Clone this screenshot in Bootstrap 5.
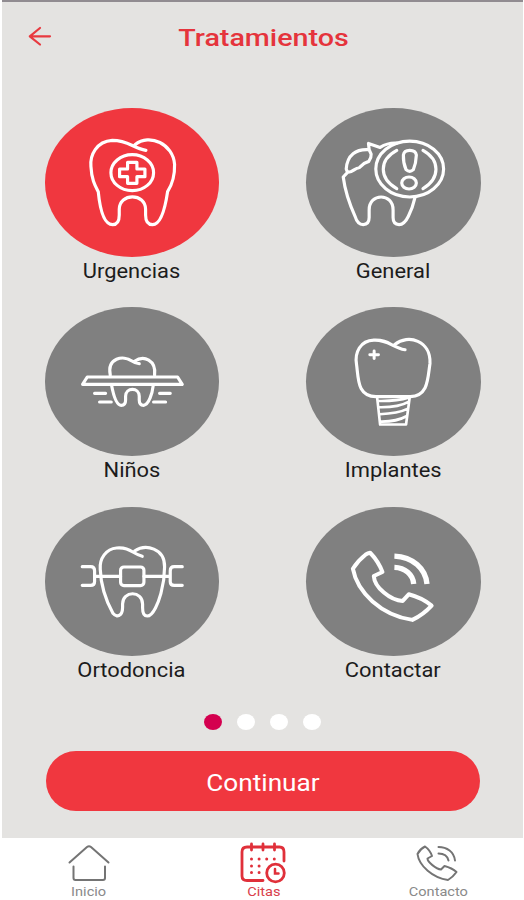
<!DOCTYPE html>
<html lang="es">
<head>
<meta charset="utf-8">
<meta name="viewport" content="width=device-width, initial-scale=1">
<title>Tratamientos</title>
<link href="https://cdn.jsdelivr.net/npm/bootstrap@5.3.0/dist/css/bootstrap.min.css" rel="stylesheet">
<style>
body{font-family:Roboto,"Liberation Sans",sans-serif;background:#fff;color:#1c1c1c}
.screen{height:900px;width:524px;overflow:hidden}
.panel{height:838px;margin:0 1px 0 2px;background:#e4e3e1;border-top:2px solid #918c91}
.topbar{height:106px;padding:0 25px}
.back{width:25px;height:22px;margin-top:23px}
.wide{display:inline-block;white-space:nowrap;transform:scaleX(var(--sx,1.12))}
.title{font-size:24px;line-height:28px;font-weight:500;color:#e5343c;margin-top:22px;padding-left:2px;--sx:1.195}
.tiles{padding:0 42.5px 0 42.5px}
.tile-row{height:199.4px}
.tile{width:174.5px}
.disc{width:174.5px;height:149px;border-radius:50%;background:#808080}
.disc.on{background:#f0373f}
.disc svg{display:block;width:100%;height:100%}
.ico{fill:none;stroke:#fff;stroke-width:9.5;stroke-linecap:round;stroke-linejoin:round}
.tile-label{font-size:20px;line-height:24px;margin-top:2px;--sx:1.095}
.dots{gap:15px;height:16px;margin-top:8px}
.dot{width:18px;height:16px;border-radius:50%;background:#fff}
.dot.on{background:#d4004f}
.cta{height:60px;width:434px;margin:21px 0 0 44px;padding:4px 0 0;border:0;background:#f0373f;color:#fff;font-size:24px;line-height:28px;--sx:1.09}
.cta:hover{background:#d92f37;color:#fff}
.tabs{height:62px;padding:0 36px 0 39px}
.tab{width:100px;color:#8a8a8a;font-size:13px;line-height:14px;text-decoration:none}
.tab.on{color:#d9404a}
.tab svg{display:block}
.tab .wide{margin-top:1px}
</style>
</head>
<body>
<div class="screen">
<main class="panel">
  <header class="topbar d-flex justify-content-between align-items-start">
    <svg class="back" viewBox="0 0 25 22" fill="none" stroke="#e83a40" stroke-width="2.2" stroke-linecap="round" stroke-linejoin="round"><path d="M13 3 2.8 11.3 13 19.5M2.8 11.3H23"/></svg>
    <h1 class="title wide mb-0">Tratamientos</h1>
    <span class="back"></span>
  </header>
  <section class="tiles">
    <div class="tile-row d-flex justify-content-between">
      <div class="tile text-center">
        <div class="disc on"><svg viewBox="15 24 522 447" class="ico"><path d="M317 151C276 144 266 121 216 121C168 124 149 166 152 199C154 238 164 256 174 275C178 316 188 374 217 374Q237 374 237 345V328C237 278 316 278 316 328V345Q316 374 337 374C366 373 377 309 382 275C394 256 404 230 403 193C399 133 329 98 284 134"/><ellipse cx="276" cy="218" rx="64" ry="54"/><path d="M262 187H290V207H314V230H290V250H262V230H238V207H262Z"/></svg></div>
        <div class="tile-label"><span class="wide">Urgencias</span></div>
      </div>
      <div class="tile text-center">
        <div class="disc"><svg viewBox="18 24 525 447" class="ico"><ellipse cx="330" cy="207" rx="102" ry="84"/><path d="M291 151C237 180 237 235 291 266M370 151C422 180 422 235 370 266"/><path d="M311 165Q313 151 330 151Q348 151 350 165Q349 190 341 209Q330 219 319 209Q310 188 311 165Z"/><ellipse cx="328" cy="249" rx="22" ry="18"/><path d="M292 129Q265 127 241 142L206 130L208 149C168 146 142 165 139 207L143 217C160 217 164 204 178 203C187 194 192 188 207 184Q215 173 214 162L208 149M143 217L130 231C136 277 150 315 166 350Q173 374 190 374Q208 374 208 353V330C208 278 280 278 280 330V353Q280 374 298 374Q314 374 326 349Q339 323 346 292"/></svg></div>
        <div class="tile-label"><span class="wide">General</span></div>
      </div>
    </div>
    <div class="tile-row d-flex justify-content-between">
      <div class="tile text-center">
        <div class="disc"><svg viewBox="15 21 522 447" class="ico"><path d="M141 231H412L426 253H127ZM210 225C200 173 249 165 275 183Q287 191 297 191M283 184C311 164 348 181 343 225M214 256C219 283 228 316 243 316Q256 316 256 300V289C256 261 297 261 297 289V300Q297 316 310 316C326 314 336 281 339 256M163 280H196M178 306H213M358 280H390M340 306H376"/></svg></div>
        <div class="tile-label"><span class="wide">Niños</span></div>
      </div>
      <div class="tile text-center">
        <div class="disc"><svg viewBox="18 21 525 447" class="ico"><path d="M316 149C276 142 267 118 222 120C181 121 164 158 170 193C176 234 171 291 230 290H332C387 288 384 234 391 190C394 122 326 100 285 133"/><path d="M232 292L241 374H319L330 292M235 303Q292 304 326 293M238 322Q297 323 326 306M240 343Q295 341 323 327M241 365Q290 366 320 349" stroke-width="8"/><path d="M223 153V175M210 164H236" stroke-width="9"/></svg></div>
        <div class="tile-label"><span class="wide">Implantes</span></div>
      </div>
    </div>
    <div class="tile-row d-flex justify-content-between">
      <div class="tile text-center">
        <div class="disc"><svg viewBox="15 19 522 447" class="ico"><path d="M306 167C276 159 270 139 229 142C198 144 177 174 180 206C182 260 199 303 218 338Q230 352 241 341Q247 335 247 319V310C247 269 307 269 307 310V321Q307 346 321 346C339 346 355 304 362 278C372 242 373 226 373 199C374 142 316 129 283 151"/><rect x="241" y="199" width="70" height="56" rx="10"/><path d="M126 198H151Q163 198 163 210V243Q163 254 151 254H126M163 227H241M311 227H390M426 198H402Q390 198 390 210V243Q390 254 402 254H426"/></svg></div>
        <div class="tile-label"><span class="wide">Ortodoncia</span></div>
      </div>
      <div class="tile text-center">
        <div class="disc"><svg viewBox="18 20 525 447" class="ico"><g stroke-width="12"><path d="M211 157Q204 158 197 163Q174 181 159 205C172 276 244 345 338 359Q370 344 396 316Q366 292 327 282L309 302C272 301 224 261 222 227L248 215Q236 183 211 157Z"/></g><path d="M284 167C339 169 378 205 382 251M284 201C316 202 340 223 342 251" stroke-width="16" stroke-linecap="butt"/></svg></div>
        <div class="tile-label"><span class="wide">Contactar</span></div>
      </div>
    </div>
  </section>
  <div class="dots d-flex justify-content-center"><span class="dot on"></span><span class="dot"></span><span class="dot"></span><span class="dot"></span></div>
  <button type="button" class="cta btn rounded-pill d-flex align-items-center justify-content-center"><span class="wide">Continuar</span></button>
</main>
<nav class="tabs d-flex justify-content-between">
  <a href="#" class="tab d-flex flex-column align-items-center"><svg width="100" height="46" viewBox="0 0 100 46" fill="none" stroke="#747474" stroke-width="2" stroke-linecap="round" stroke-linejoin="round"><path d="M30.500 24.500 48 9Q50 7.500 52 9L69.500 24.500M34.500 28.500V40Q34.500 42 36.500 42H64Q66 42 66 40V28.500"/></svg><span class="wide">Inicio</span></a>
  <a href="#" class="tab on d-flex flex-column align-items-center"><svg width="100" height="46" viewBox="1 0 100 46" fill="none" stroke="#e0303a" stroke-width="2.800" stroke-linecap="round"><path d="M50 42.500H34Q29 42.500 29 38V14Q29 9 34 9H66.500Q71 9 71 14V23M38.500 6V12M50 6V12M61.500 6V12"/><circle cx="62.500" cy="35" r="8.800"/><path d="M62 31V35.500H65.500" stroke-width="2.500"/><path d="M38.500 21H65M38.500 28H52M38.500 34.500H48" stroke-width="3" stroke-dasharray="0 7.600"/></svg><span class="wide">Citas</span></a>
  <a href="#" class="tab d-flex flex-column align-items-center"><svg width="100" height="46" viewBox="0 0 100 46" fill="none" stroke="#747474" stroke-width="2" stroke-linecap="round" stroke-linejoin="round"><path d="M37 8.500Q32 11 29.500 16C31 28 45 40 60 42Q65 39 68.500 34Q64 30 56.500 28L53 31.500C48 31 39.500 24 39.500 20.500L44 18Q42 12 37 8.500ZM50.500 9C59 9 66 14 67 22.500M50.500 15.500C56 15.500 59.500 18 60.500 22.500"/></svg><span class="wide">Contacto</span></a>
</nav>
</div>
<script src="https://cdn.jsdelivr.net/npm/bootstrap@5.3.0/dist/js/bootstrap.bundle.min.js"></script>
</body>
</html>
